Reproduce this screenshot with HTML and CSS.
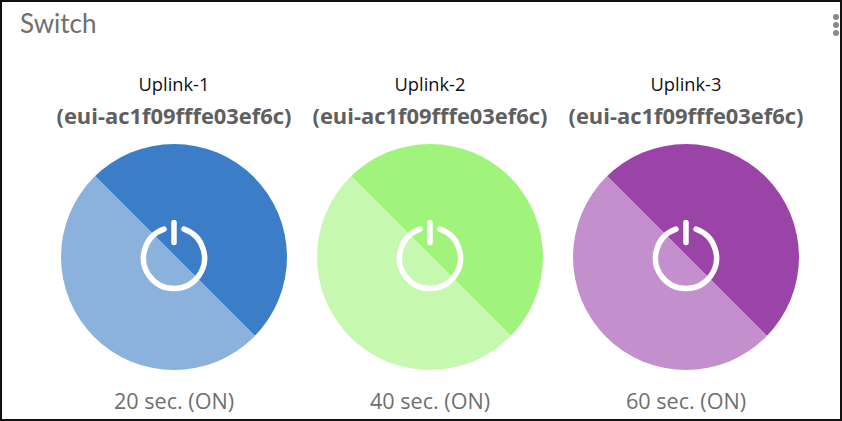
FILE: index.html
```html
<!DOCTYPE html>
<html lang="en">
    <head>
        <meta charset="UTF-8" />
        <title>Switch</title>
        <link rel="stylesheet" href="styles.css">
    </head>
    <body>
        <div class="card">
            <div class="card-head">
                <h2>Switch</h2>
                <div class="menu"><span></span><span></span><span></span></div>
            </div>
            <div class="switches">
                <div class="switch">
                    <div class="name">Uplink-1</div>
                    <div class="eui">(eui-ac1f09fffe03ef6c)</div>
                    <div class="dial blue">
                        <svg viewBox="0 0 74 74" width="74" height="74">
                            <path d="M27 9.2a30.5 30.5 0 1 0 20 0" />
                            <path d="M37 2.5v20" />
                        </svg>
                    </div>
                    <div class="time">20 sec. (ON)</div>
                </div>
                <div class="switch">
                    <div class="name">Uplink-2</div>
                    <div class="eui">(eui-ac1f09fffe03ef6c)</div>
                    <div class="dial green">
                        <svg viewBox="0 0 74 74" width="74" height="74">
                            <path d="M27 9.2a30.5 30.5 0 1 0 20 0" />
                            <path d="M37 2.5v20" />
                        </svg>
                    </div>
                    <div class="time">40 sec. (ON)</div>
                </div>
                <div class="switch">
                    <div class="name">Uplink-3</div>
                    <div class="eui">(eui-ac1f09fffe03ef6c)</div>
                    <div class="dial purple">
                        <svg viewBox="0 0 74 74" width="74" height="74">
                            <path d="M27 9.2a30.5 30.5 0 1 0 20 0" />
                            <path d="M37 2.5v20" />
                        </svg>
                    </div>
                    <div class="time">60 sec. (ON)</div>
                </div>
            </div>
        </div>
    </body>
</html>
```

FILE: styles.css
```css
body {
    margin: 0;
    background: white;
}
.card {
    width: 842px;
    height: 421px;
    box-sizing: border-box;
    border: 2px solid #111;
    overflow: hidden;
}
.card-head {
    display: flex;
    justify-content: space-between;
    height: 61px;
    padding: 6px 1px 0 18px;
}
h2 {
    margin: 0;
    font-family: "Lato", sans-serif;
    font-size: 26px;
    line-height: 30px;
    font-weight: 400;
    color: #6f6f6f;
}
.menu {
    display: flex;
    flex-direction: column;
    gap: 2px;
    padding-top: 6px;
}
.menu span {
    width: 6px;
    height: 6px;
    border-radius: 50%;
    background: #8a8a8a;
}
.switches {
    display: grid;
    grid-template-columns: repeat(3, 256px);
    padding-left: 44px;
}
.switch {
    display: flex;
    flex-direction: column;
    align-items: center;
    font-family: "Open Sans", sans-serif;
}
.name {
    font-size: 18.3px;
    line-height: 30px;
    color: #111;
}
.eui {
    font-size: 21.9px;
    line-height: 34px;
    font-weight: 700;
    color: #5f5f5f;
    white-space: nowrap;
}
.dial {
    width: 226px;
    height: 226px;
    margin-top: 11px;
    border-radius: 50%;
    display: flex;
    align-items: center;
    justify-content: center;
}
.dial svg {
    fill: none;
    stroke: white;
    stroke-width: 5.5;
    stroke-linecap: round;
}
.blue {
    background: linear-gradient(45deg, #8ab2dd 50.5%, #3b7dc6 50.5%);
}
.green {
    background: linear-gradient(45deg, #c7f8b0 50.5%, #a0f47c 50.5%);
}
.purple {
    background: linear-gradient(45deg, #c48fcd 50.5%, #9b44a8 50.5%);
}
.time {
    margin-top: 16px;
    font-size: 21.6px;
    line-height: 30px;
    color: #6f6f6f;
}
```
